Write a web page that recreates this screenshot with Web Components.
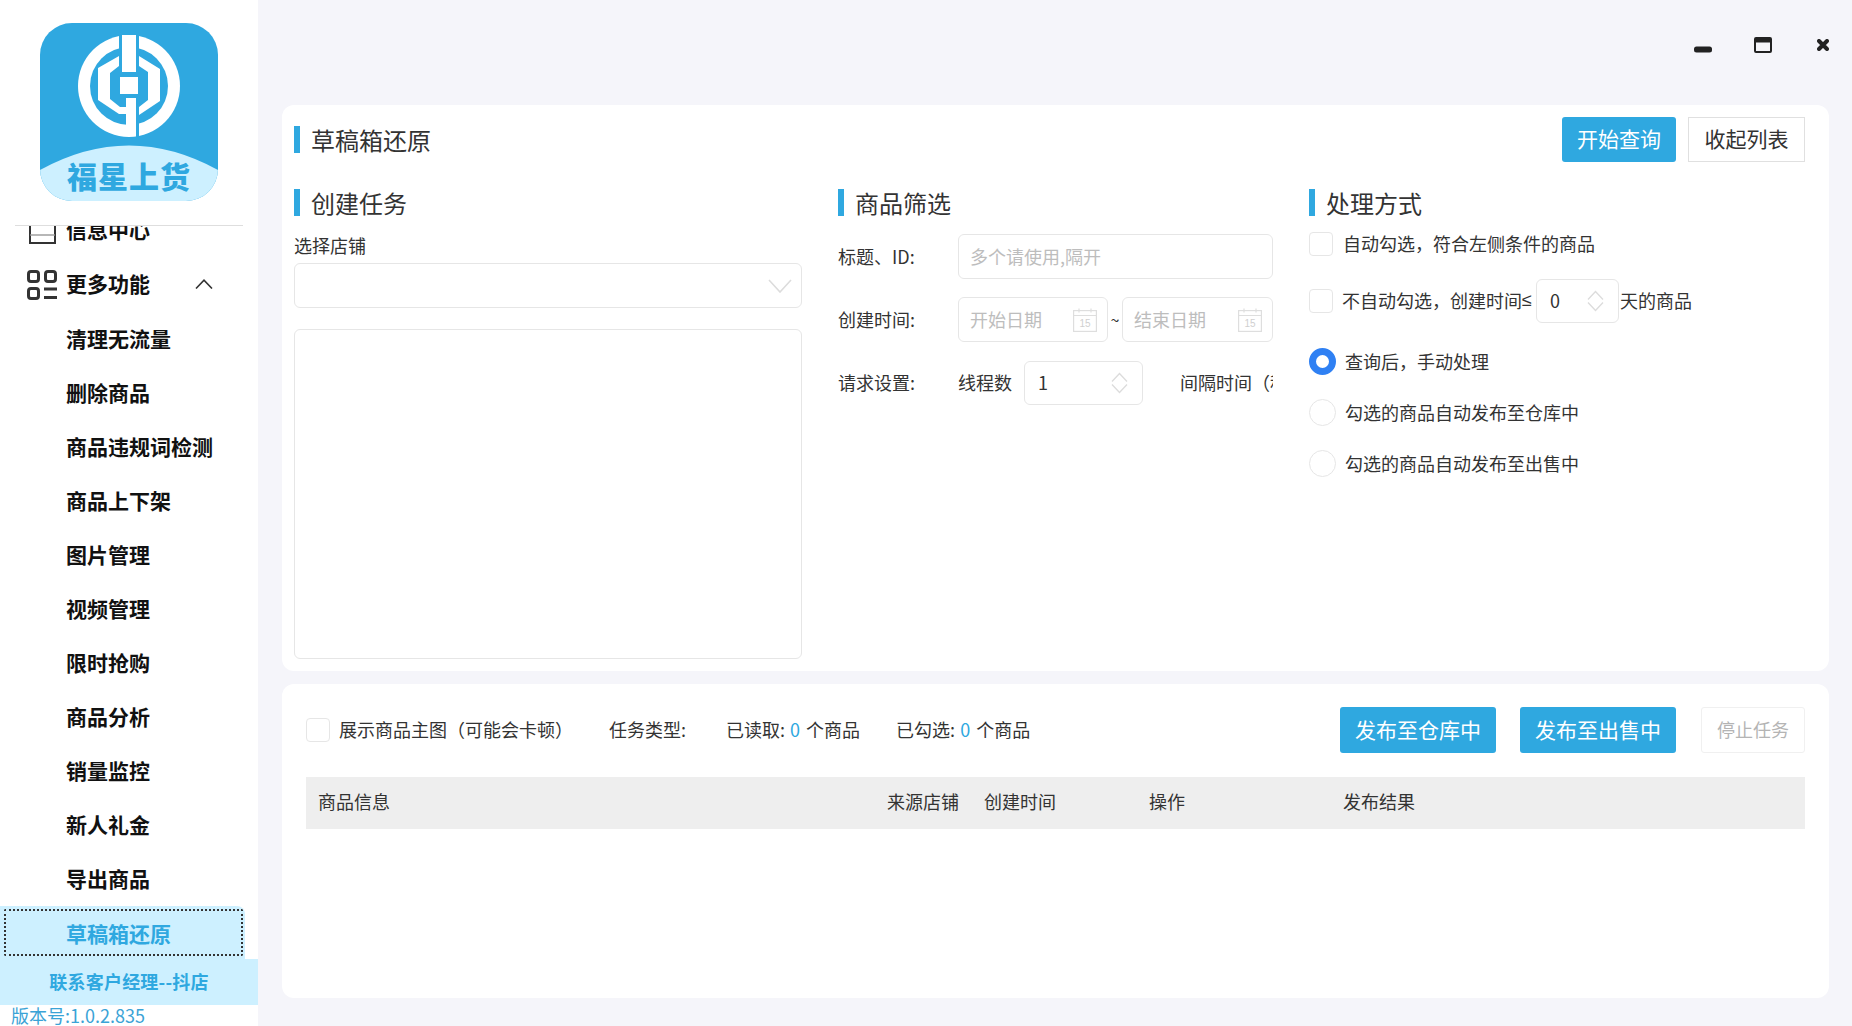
<!DOCTYPE html>
<html lang="zh">
<head>
<meta charset="utf-8">
<title>草稿箱还原</title>
<style>
    html, body { margin: 0; height: 1026px; overflow: hidden; }
    body {
        display: flex;
        background: #f5f5fa;
        color: #333;
        font: 18px/1.2 "Noto Sans CJK SC", "Microsoft YaHei", sans-serif;
    }
    /* layout helpers for the page itself */
    .columns { display: grid; grid-template-columns: 508px 435px 1fr; column-gap: 36px; margin-top: 27px; }
    .col { display: flex; flex-direction: column; min-width: 0; }
    .spread { display: flex; justify-content: space-between; align-items: center; }
    .group { display: flex; gap: 12px; }
</style>
</head>
<body>

<fx-sidebar>
    <fx-logo slot="head"></fx-logo>
    <fx-nav-item icon="box" style="height:56px;margin-top:-2px">信息中心</fx-nav-item>
    <fx-nav-item icon="grid" open style="padding-bottom:2px">更多功能</fx-nav-item>
    <fx-nav-item>清理无流量</fx-nav-item>
    <fx-nav-item>删除商品</fx-nav-item>
    <fx-nav-item>商品违规词检测</fx-nav-item>
    <fx-nav-item>商品上下架</fx-nav-item>
    <fx-nav-item>图片管理</fx-nav-item>
    <fx-nav-item>视频管理</fx-nav-item>
    <fx-nav-item>限时抢购</fx-nav-item>
    <fx-nav-item>商品分析</fx-nav-item>
    <fx-nav-item>销量监控</fx-nav-item>
    <fx-nav-item>新人礼金</fx-nav-item>
    <fx-nav-item>导出商品</fx-nav-item>
    <fx-nav-item active>草稿箱还原</fx-nav-item>
    <span slot="contact">联系客户经理--抖店</span>
    <span slot="version">版本号:1.0.2.835</span>
</fx-sidebar>

<fx-main>
    <fx-window-bar slot="bar"></fx-window-bar>

    <fx-card slot="top">
        <div class="spread">
            <fx-heading>草稿箱还原</fx-heading>
            <div class="group">
                <fx-btn kind="primary" style="width:114px">开始查询</fx-btn>
                <fx-btn kind="plain" style="width:117px">收起列表</fx-btn>
            </div>
        </div>
        <div class="columns">
            <div class="col">
                <fx-heading>创建任务</fx-heading>
                <fx-label>选择店铺</fx-label>
                <fx-select></fx-select>
                <fx-box></fx-box>
            </div>
            <div class="col" style="gap:19px">
                <fx-heading style="margin-bottom:-1px">商品筛选</fx-heading>
                <fx-row label="标题、ID:" style="height:45px;margin-bottom:-1px">
                    <fx-input style="flex:1">多个请使用,隔开</fx-input>
                </fx-row>
                <fx-row label="创建时间:" style="height:45px">
                    <fx-date style="width:150px">开始日期</fx-date>
                    <span style="width:14px;text-align:center;font-size:16px">~</span>
                    <fx-date style="width:151px">结束日期</fx-date>
                </fx-row>
                <fx-row label="请求设置:" style="height:44px">
                    <span>线程数</span>
                    <fx-spin value="1" style="width:119px;margin:0 37px 0 12px"></fx-spin>
                    <span>间隔时间（秒）</span>
                </fx-row>
            </div>
            <div class="col" style="gap:24px">
                <fx-heading style="margin-bottom:-8px">处理方式</fx-heading>
                <fx-check>自动勾选，符合左侧条件的商品</fx-check>
                <fx-check style="height:44px;--gap:9px;margin-top:-1px">不自动勾选，创建时间<span style="font-family:'Liberation Sans',sans-serif">≤</span><fx-spin value="0" style="width:83px;margin:0 1px 0 4px"></fx-spin>天的商品</fx-check>
                <fx-radio checked style="margin-top:1px">查询后，手动处理</fx-radio>
                <fx-radio>勾选的商品自动发布至仓库中</fx-radio>
                <fx-radio>勾选的商品自动发布至出售中</fx-radio>
            </div>
        </div>
    </fx-card>

    <fx-card slot="bottom" pad>
        <fx-toolbar>
            <fx-check style="--gap:9px">展示商品主图（可能会卡顿）</fx-check>
            <span style="margin-left:36px">任务类型:</span>
            <span style="margin-left:40px">已读取: <fx-count>0</fx-count> 个商品</span>
            <span style="margin-left:36px">已勾选: <fx-count>0</fx-count> 个商品</span>
            <fx-btn kind="primary" style="width:156px;margin-left:auto">发布至仓库中</fx-btn>
            <fx-btn kind="primary" style="width:156px;margin-left:24px">发布至出售中</fx-btn>
            <fx-btn kind="disabled" style="width:104px;margin-left:25px">停止任务</fx-btn>
        </fx-toolbar>
        <fx-table-head>
            <span>商品信息</span><span>来源店铺</span><span>创建时间</span><span>操作</span><span>发布结果</span>
        </fx-table-head>
    </fx-card>
</fx-main>

<script>
    // small helper: every element gets its own open shadow root from one template
    function define(name, css, html, setup){
        const template = document.createElement('template');
        template.innerHTML = `<style>${css}</style>${html}`;
        customElements.define(name, class extends HTMLElement{
            constructor(){
                super();
                this.attachShadow({mode: "open"});
                this.shadowRoot.appendChild(template.content.cloneNode(true));
            }
            connectedCallback(){
                if(setup) setup(this, this.shadowRoot);
            }
        });
    }

    const BLUE = '#2fa8e0';
    const LINE = '#e6e6e6';

    define('fx-sidebar', `
        :host{display:flex;flex-direction:column;flex:none;width:258px;height:1026px;background:#fff;overflow:hidden}
        .head{height:225px;flex:none;box-sizing:border-box;padding:23px 0 0 40px}
        .rule{flex:none;height:1px;margin:0 15px;background:#dedede}
        .nav{height:733px;flex:none;overflow:hidden}
        .inner{margin-top:-22px;display:flex;flex-direction:column}
        .contact{height:46px;flex:none;background:#cdf0ff;color:${BLUE};font-weight:700;font-size:18px;letter-spacing:.2px;display:flex;align-items:center;justify-content:center}
        .version{height:21px;flex:none;padding-left:11px;color:#3aa3d6;font-size:18px;line-height:21px;white-space:nowrap}
    `, `
        <div class="head"><slot name="head"></slot></div>
        <div class="rule"></div>
        <div class="nav"><div class="inner"><slot></slot></div></div>
        <div class="contact"><slot name="contact"></slot></div>
        <div class="version"><slot name="version"></slot></div>
    `);

    define('fx-logo', `
        :host{display:block;width:178px;height:178px}
        svg{display:block}
        text{font-family:"Noto Sans CJK SC",sans-serif;font-weight:900;font-size:30px}
    `, `
        <svg width="178" height="178" viewBox="40 23 178 178">
            <defs><clipPath id="r"><rect x="40" y="23" width="178" height="178" rx="32"/></clipPath></defs>
            <g clip-path="url(#r)">
                <rect x="40" y="23" width="178" height="178" fill="${BLUE}"/>
                <path d="M40 170Q129 121 218 170V201H40Z" fill="#cdf0ff"/>
            </g>
            <circle cx="129" cy="86" r="51" fill="#fff"/>
            <circle cx="129" cy="86" r="39" fill="${BLUE}"/>
            <path d="M119 56 98 68V100L119 114H126V107H120L110 99V73L119 66Z" fill="#fff"/>
            <path d="M139 56 160 69V101L139 115V107L148 100V72L139 66Z" fill="#fff"/>
            <rect x="122" y="35" width="14" height="37" fill="#fff"/>
            <rect x="126" y="98" width="10" height="38" fill="#fff"/>
            <rect x="120" y="77" width="18" height="17" fill="#fff"/>
            <rect x="119" y="34" width="3" height="22" fill="${BLUE}"/>
            <rect x="136" y="34" width="3" height="22" fill="${BLUE}"/>
            <rect x="136" y="100" width="3" height="38" fill="${BLUE}"/>
            <text x="129" y="188" text-anchor="middle" fill="${BLUE}" letter-spacing="1">福星上货</text>
        </svg>
    `);

    const NAV_ICONS = {
        grid: `<svg width="30" height="30" viewBox="0 0 30 30" fill="none" stroke="#333" stroke-width="3">
                <rect x="1.5" y="1.5" width="10" height="10" rx="2.5"/><rect x="18.5" y="1.5" width="10" height="10" rx="2.5"/>
                <rect x="1.5" y="18.5" width="10" height="10" rx="2.5"/><path d="M17 19H30M17 27.5H30"/></svg>`,
        box: `<svg width="30" height="30" viewBox="0 0 30 30" fill="none" stroke="#333" stroke-width="2">
                <path d="M3 8V29H28V8"/><path d="M3 21H28" stroke="#999" stroke-width="1.4"/></svg>`
    };

    define('fx-nav-item', `
        :host{display:flex;align-items:center;box-sizing:border-box;height:54px;padding-left:66px;font-size:21px;font-weight:700;color:#111;position:relative;white-space:nowrap;flex:none}
        :host([active]){height:53px;width:245px;padding-top:2px;background:#cdf0ff;color:${BLUE};border-radius:0 8px 0 0}
        :host([active])::after{content:"";position:absolute;inset:3px 2px 3px 4px;border:2px dotted #333;border-radius:2px;pointer-events:none}
        .icon{position:absolute;left:27px;top:12px;line-height:0}
        .chev{position:absolute;left:195px;top:21px;line-height:0}
    `, `<span class="icon"></span><slot></slot><span class="chev"></span>`, (el, root) => {
        const icon = el.getAttribute('icon');
        if(icon) root.querySelector('.icon').innerHTML = NAV_ICONS[icon];
        if(el.hasAttribute('open')){
            root.querySelector('.chev').innerHTML = `<svg width="18" height="10" viewBox="0 0 18 10" fill="none" stroke="#333" stroke-width="1.6"><path d="M1 9.5 9 1.2 17 9.5"/></svg>`;
        }
    });

    define('fx-main', `
        :host{display:flex;flex-direction:column;flex:1;min-width:0;height:1026px;box-sizing:border-box;padding:0 23px 28px 24px}
        .bar{height:105px;flex:none}
        .top{height:566px;flex:none;display:flex}
        .bottom{height:314px;flex:none;margin-top:13px;display:flex}
        ::slotted(fx-card){flex:1}
    `, `
        <div class="bar"><slot name="bar"></slot></div>
        <div class="top"><slot name="top"></slot></div>
        <div class="bottom"><slot name="bottom"></slot></div>
    `);

    define('fx-window-bar', `
        :host{display:flex;justify-content:flex-end;align-items:flex-start;padding-top:37px}
        svg{display:block}
    `, `
        <svg width="18" height="16" viewBox="0 0 18 16"><rect x="0" y="9.5" width="18" height="6" rx="2.5" fill="#222"/></svg>
        <svg style="margin-left:42px" width="18" height="16" viewBox="0 0 18 16"><rect x="1" y="1" width="16" height="14" rx="1" fill="none" stroke="#222" stroke-width="2"/><rect x="1" y="1" width="16" height="4.5" fill="#222"/></svg>
        <svg style="margin-left:45px;margin-top:2px" width="12" height="12" viewBox="0 0 12 12"><path d="M2 2 10 10M10 2 2 10" stroke="#222" stroke-width="4" stroke-linecap="round"/></svg>
    `);

    define('fx-card', `
        :host{display:block;box-sizing:border-box;background:#fff;border-radius:12px;padding:12px 24px 12px 12px}
        :host([pad]){padding:23px 24px}
    `, `<slot></slot>`);

    define('fx-heading', `
        :host{display:flex;align-items:center;height:27px;flex:none;font-size:24px;line-height:27px;color:#333;white-space:nowrap}
        i{width:6px;height:27px;background:${BLUE};margin-right:11px;flex:none}
    `, `<i></i><slot></slot>`);

    define('fx-btn', `
        :host{display:inline-flex;align-items:center;justify-content:center;box-sizing:border-box;height:45px;flex:none;border-radius:3px;font-size:21px;padding-bottom:1px;white-space:nowrap}
        :host([kind=primary]){background:${BLUE};color:#fff}
        :host([kind=plain]){background:#fff;color:#333;border:1px solid #e0e0e0;border-radius:0}
        :host([kind=disabled]){background:#fff;color:#b4b4b4;border:1px solid #f0f0f0;font-size:18px}
    `, `<slot></slot>`);

    define('fx-label', `
        :host{display:block;margin-top:17px;height:24px;line-height:24px;margin-bottom:6px}
    `, `<slot></slot>`);

    define('fx-select', `
        :host{display:block;height:45px;box-sizing:border-box;border:1px solid ${LINE};border-radius:6px;position:relative;flex:none}
        svg{position:absolute;right:9px;top:15px}
    `, `<svg width="24" height="14" viewBox="0 0 24 14" fill="none" stroke="#dcdcdc" stroke-width="1.6"><path d="M1 1 12 13 23 1"/></svg>`);

    define('fx-box', `
        :host{display:block;height:330px;margin-top:21px;box-sizing:border-box;border:1px solid ${LINE};border-radius:6px}
    `, ``);

    define('fx-row', `
        :host{display:flex;align-items:center;white-space:nowrap;overflow:hidden;flex:none}
        .label{width:120px;flex:none}
    `, `<span class="label"></span><slot></slot>`, (el, root) => {
        root.querySelector('.label').textContent = el.getAttribute('label');
    });

    define('fx-input', `
        :host{display:flex;align-items:center;box-sizing:border-box;height:100%;padding-left:11px;border:1px solid ${LINE};border-radius:6px;color:#bdbdbd}
    `, `<slot></slot>`);

    define('fx-date', `
        :host{display:flex;align-items:center;justify-content:space-between;box-sizing:border-box;height:100%;flex:none;padding:0 10px 0 11px;border:1px solid ${LINE};border-radius:6px;color:#bdbdbd}
        svg{display:block}
        text{font:10px "Liberation Sans",sans-serif;fill:#d0d0d0}
    `, `<slot></slot>
        <svg width="24" height="24" viewBox="0 0 24 24" fill="none" stroke="#dedede" stroke-width="1.2">
            <rect x=".6" y="2.6" width="22.8" height="20.8"/><path d="M.6 7.5H23.4M6 .5V4.5M18 .5V4.5"/>
            <text x="12" y="19" text-anchor="middle" stroke="none">15</text>
        </svg>`);

    define('fx-spin', `
        :host{display:inline-flex;align-items:center;justify-content:space-between;box-sizing:border-box;height:100%;flex:none;padding:0 14px 0 13px;border:1px solid ${LINE};border-radius:6px;color:#333}
        svg{display:block}
    `, `<span></span>
        <svg width="17" height="22" viewBox="0 0 17 22" fill="none" stroke="#dcdcdc" stroke-width="1.3"><path d="M1 9.5 8.5 1.5 16 9.5M1 12.5 8.5 20.5 16 12.5"/></svg>`,
    (el, root) => { root.querySelector('span').textContent = el.getAttribute('value'); });

    define('fx-check', `
        :host{display:flex;align-items:center;white-space:nowrap;flex:none}
        i{width:24px;height:24px;box-sizing:border-box;border:1px solid ${LINE};border-radius:4px;flex:none;margin-right:var(--gap,10px)}
    `, `<i></i><slot></slot>`);

    define('fx-radio', `
        :host{display:flex;align-items:center;gap:9px;white-space:nowrap;flex:none;height:27px}
        i{width:27px;height:27px;box-sizing:border-box;border:1px solid ${LINE};border-radius:50%;flex:none;background:#fff}
        :host([checked]) i{border:7.5px solid #2f80f3}
    `, `<i></i><slot></slot>`);

    define('fx-count', `:host{color:${BLUE};margin:0 2px 0 1px}`, `<slot></slot>`);

    define('fx-toolbar', `
        :host{display:flex;align-items:center;height:46px;white-space:nowrap}
        ::slotted(fx-btn){height:46px}
    `, `<slot></slot>`);

    define('fx-table-head', `
        :host{display:grid;grid-template-columns:569px 97px 165px 194px 1fr;align-items:center;box-sizing:border-box;height:52px;margin-top:24px;padding:0 0 2px 12px;background:#eee}
    `, `<slot></slot>`);
</script>
</body>
</html>
